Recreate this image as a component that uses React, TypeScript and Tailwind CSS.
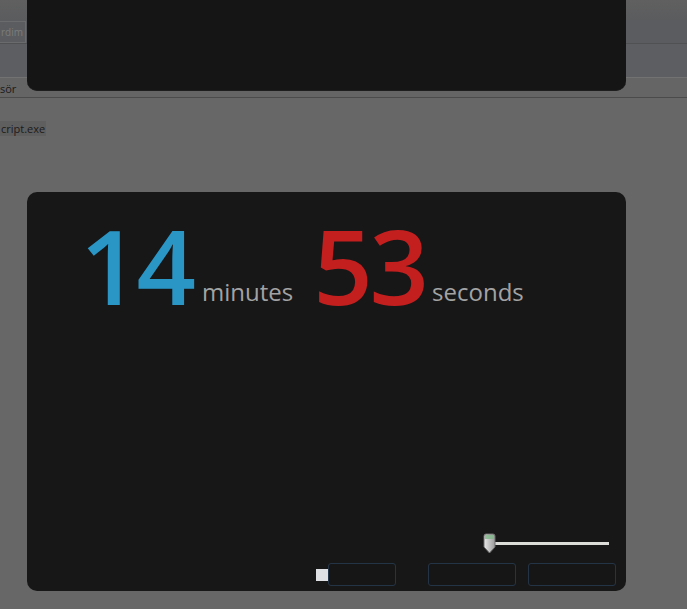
import React from "react";

const font = { fontFamily: '"Open Sans", "Noto Sans", sans-serif' };

export default function App() {
  return (
    <div className="relative w-[687px] h-[609px] overflow-hidden bg-[#676767]" style={font}>
      {/* dimmed window behind */}
      <div className="flex flex-col">
        <div className="h-[20px] bg-gradient-to-b from-[#606060] to-[#5b5c5e]" />
        <div className="h-[24px] bg-[#5a5c5f] border-b border-[#505153] flex items-center">
          <div className="h-[22px] border border-[#6a6b6d] border-l-0 text-[10px] leading-[20px] text-[#7c7c7c] pl-[1px] pr-[2px]">
            rdim
          </div>
        </div>
        <div className="h-[34px] bg-[#5c5e61] border-b border-[#727272]" />
        <div className="h-[20px] bg-[#656565] border-b border-[#4b4b4b] flex items-center">
          <span className="text-[11px] text-[#1a1a1a] pt-[3px]">sör</span>
        </div>
        <div className="pt-[17px]">
          <span className="bg-[#5f5f5f] text-[11px] text-[#1b1b1b] px-[1px]">cript.exe</span>
        </div>
      </div>

      {/* top overlay panel */}
      <div className="absolute left-[27px] top-0 w-[599px] h-[91px] bg-[#151515] rounded-b-[10px] border-b border-[#1e1e1e]" />

      {/* timer panel */}
      <div className="absolute left-[27px] top-[192px] w-[599px] h-[399px] bg-[#181718] rounded-[10px] flex flex-col">
        <div className="flex items-end pl-[53px] pt-[14px]">
          <span className="text-[104px] leading-[118px] font-semibold text-[#2a96c6] tracking-[-3px]">14</span>
          <span className="text-[24px] text-[#a3a3a3] ml-[9px] mb-[14px]">minutes</span>
          <span className="text-[104px] leading-[118px] font-semibold text-[#c41f1f] tracking-[-3px] ml-[20px]">53</span>
          <span className="text-[24px] text-[#a3a3a3] ml-[6px] mb-[14px]">seconds</span>
        </div>
        <div className="mt-auto flex flex-col items-end pr-[10px] pb-[5px] gap-[10px]">
          <div className="relative w-[126px] h-[20px] mr-[7px]">
            <div className="absolute left-[6px] right-0 top-[9px] h-[3px] bg-[#dcdcd8]" />
            <svg className="absolute left-0 top-0" width="13" height="21" viewBox="0 0 13 21">
              <defs>
                <linearGradient id="th" x1="0" y1="0" x2="1" y2="0">
                  <stop offset="0" stopColor="#e8e8e8" />
                  <stop offset="1" stopColor="#9a9a9a" />
                </linearGradient>
              </defs>
              <path d="M1 3 Q1 1 3 1 H10 Q12 1 12 3 V14 L6.5 20 L1 14 Z" fill="url(#th)" stroke="#6b6b6b" strokeWidth="1" />
              <path d="M2 2 H11 V6 H2 Z" fill="#7fb88a" opacity="0.8" />
            </svg>
          </div>
          <div className="flex items-center">
            <div className="w-[12px] h-[12px] bg-[#dfe0e4] mt-[1px]" />
            <button className="w-[68px] h-[23px] border border-[#243447] rounded-[3px] bg-[#161617]" />
            <button className="w-[88px] h-[23px] border border-[#243447] rounded-[3px] bg-[#161617] ml-[32px]" />
            <button className="w-[88px] h-[23px] border border-[#243447] rounded-[3px] bg-[#161617] ml-[12px]" />
          </div>
        </div>
      </div>
    </div>
  );
}
